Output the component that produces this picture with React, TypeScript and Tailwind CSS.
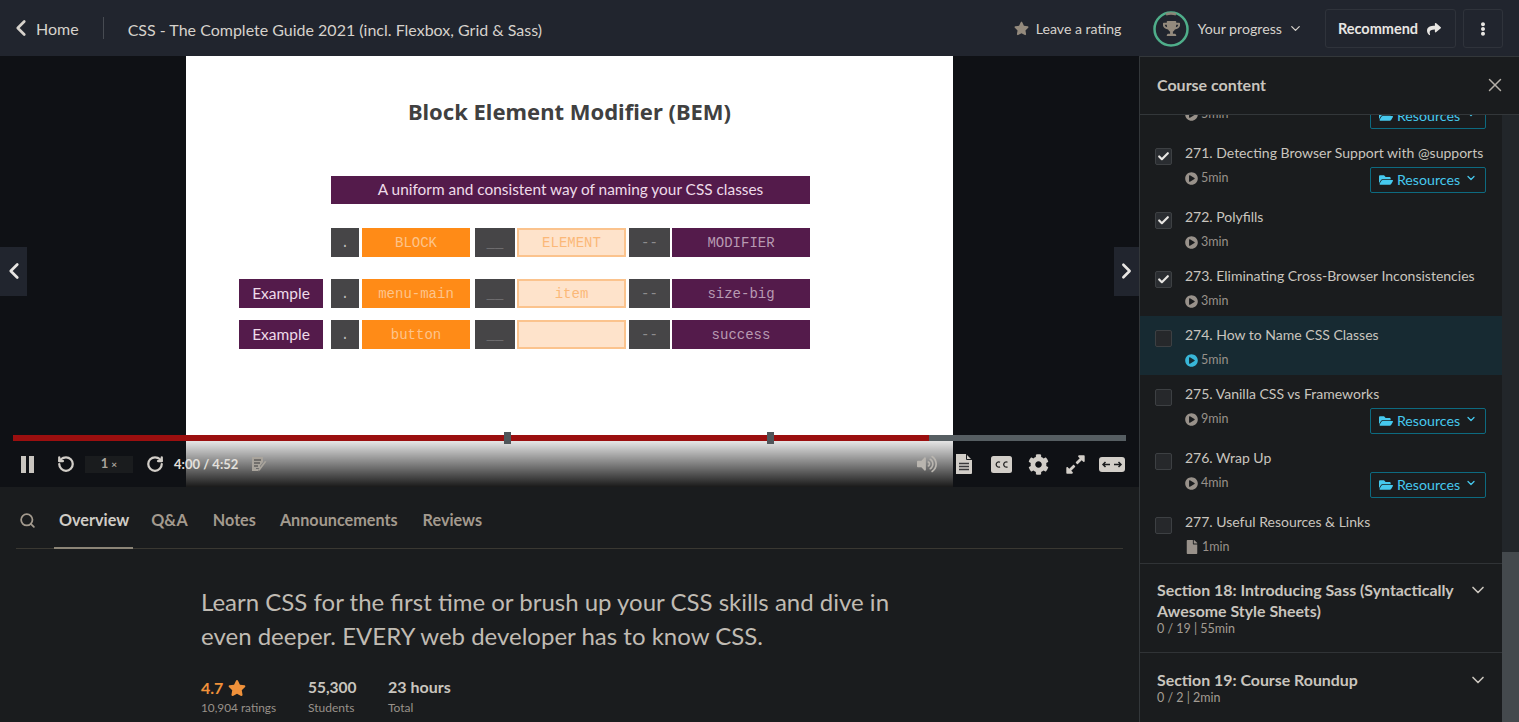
import { ChevronDown, ChevronLeft, ChevronRight, Search, X, RotateCcw, RotateCw, Check } from "lucide-react";
import { FaCog, FaFile, FaFolderOpen, FaPlayCircle, FaShare, FaStar, FaTrophy, FaVolumeUp, FaEllipsisV, FaExpandAlt } from "react-icons/fa";

const sans = "font-['Lato',sans-serif]";

interface Lecture {
  title: string;
  time: string;
  done?: boolean;
  current?: boolean;
  resources?: boolean;
  article?: boolean;
}

// first row is scrolled mostly out of view, only its bottom edge shows
const lectures: Lecture[] = [
  { title: "", time: "5min", done: true, resources: true },
  { title: "271. Detecting Browser Support with @supports", time: "5min", done: true, resources: true },
  { title: "272. Polyfills", time: "3min", done: true },
  { title: "273. Eliminating Cross-Browser Inconsistencies", time: "3min", done: true },
  { title: "274. How to Name CSS Classes", time: "5min", current: true },
  { title: "275. Vanilla CSS vs Frameworks", time: "9min", resources: true },
  { title: "276. Wrap Up", time: "4min", resources: true },
  { title: "277. Useful Resources & Links", time: "1min", article: true },
];

const Cell = ({ className, children }: { className: string; children?: React.ReactNode }) => (
  <div className={`flex h-[29px] items-center justify-center font-['Liberation_Mono',monospace] text-sm ${className}`}>{children}</div>
);

const SlideRow = ({ label, block, element, modifier }: { label?: string; block: string; element: string; modifier: string }) => (
  <div className="flex">
    {label ? (
      <div className="flex h-[29px] w-[84px] items-center justify-center bg-[#541b4b] font-['Lato',sans-serif] text-[15.500px] text-[#eedbe9]">{label}</div>
    ) : (
      <div className="w-[84px]" />
    )}
    <Cell className="ml-[8px] w-[28px] bg-[#464547] text-[#bdbcbd]">.</Cell>
    <Cell className="ml-[3px] w-[108px] bg-[#ff8b17] text-[#fdc48b]">{block}</Cell>
    <Cell className="ml-[5px] w-[40px] bg-[#464547] text-[#8d8c8e]">__</Cell>
    <Cell className="ml-[2px] w-[109px] border-2 border-[#fbc38d] bg-[#fee3cb] text-[#fbb878]">{element}</Cell>
    <Cell className="ml-[3px] w-[41px] bg-[#464547] text-[#8d8c8e]">--</Cell>
    <Cell className="ml-[2px] w-[138px] bg-[#541b4b] text-[#b89ab2]">{modifier}</Cell>
  </div>
);

const Slide = () => (
  <div className="flex h-full w-[767px] flex-col items-center bg-white pt-[40px]">
    <h1 className="font-['Noto_Sans',sans-serif] text-[22px] leading-[30px] font-bold text-[#404040]">Block Element Modifier (BEM)</h1>
    <div className="mt-[50px] flex w-full flex-col pl-[53px]">
      <div className="ml-[92px] flex h-[28px] w-[479px] items-center justify-center bg-[#541b4b] font-['Lato',sans-serif] text-[15.400px] text-[#eedbe9]">
        A uniform and consistent way of naming your CSS classes
      </div>
      <div className="mt-[24px]">
        <SlideRow block="BLOCK" element="ELEMENT" modifier="MODIFIER" />
      </div>
      <div className="mt-[22px]">
        <SlideRow label="Example" block="menu-main" element="item" modifier="size-big" />
      </div>
      <div className="mt-[12px]">
        <SlideRow label="Example" block="button" element="" modifier="success" />
      </div>
    </div>
  </div>
);

const Video = () => (
  <div className="relative flex h-[431px] justify-center bg-[#0f1115]">
    <Slide />
    <button className="absolute top-[191px] left-0 flex h-[49px] w-[27px] items-center justify-center bg-[#21252e] pb-[2px] text-[#e8e6e3]">
      <ChevronLeft size={26} strokeWidth={2.5} />
    </button>
    <button className="absolute top-[191px] right-0 flex h-[49px] w-[25px] items-center justify-center bg-[#21252e] pb-[2px] text-[#e8e6e3]">
      <ChevronRight size={26} strokeWidth={2.5} />
    </button>
    <div className="absolute bottom-0 left-[186px] h-[46px] w-[767px] bg-gradient-to-b from-black/10 to-black/90" />
    {/* progress */}
    <div className="absolute top-[379px] left-[13px] flex h-[6px] w-[1113px]">
      <div className="w-[916px] bg-[#9b0f0f]" />
      <div className="flex-1 bg-[#565e62]" />
      <span className="absolute top-[-3px] left-[491px] h-[12px] w-[7px] bg-[#50565a]" />
      <span className="absolute top-[-3px] left-[754px] h-[12px] w-[7px] bg-[#50565a]" />
    </div>
    {/* controls */}
    <div className={`absolute right-[14px] bottom-[5px] left-[21px] flex h-[36px] items-center justify-between text-[#d2cec8] ${sans}`}>
      <div className="flex items-center">
        <svg width="13" height="17" viewBox="0 0 13 17" fill="#c9c5bf"><rect width="5" height="17" /><rect x="8" width="5" height="17" /></svg>
        <RotateCcw size={18} strokeWidth={3} className="ml-[23px]" />
        <div className="ml-[10px] flex h-[17px] w-[48px] items-center justify-center bg-[#1a1c1e] text-[13px] font-bold text-[#a9a49c]">1<span className="ml-[3px] text-[10px]">×</span></div>
        <RotateCw size={18} strokeWidth={3} className="ml-[13px]" />
        <span className="ml-[10px] pt-[1px] text-[13px] font-bold text-[#e3e0dc]">4:00 / 4:52</span>
        <svg width="16" height="15" viewBox="0 0 16 15" className="ml-[13px]">
          <path d="M1 0h11v5l-3 4v2H5v1h3l-1 2H1z" fill="#a9a49c" />
          <path d="M3 3h7M3 6h6M3 9h4" stroke="#3a3a3c" strokeWidth="1" />
          <path d="M15.500 4.500l-6 8-2 2 .4-3 6-7.500z" fill="#a9a49c" />
        </svg>
      </div>
      <div className="flex items-center">
        <FaVolumeUp size={20} className="text-[#b9b5af]" />
        <svg width="18" height="20" viewBox="0 0 18 20" className="ml-[18px]">
          <path d="M1 0h10l6 6v13a1 1 0 0 1-1 1H1z" fill="#d2cec8" />
          <path d="M11.500 0v5.500H17" stroke="#1a1c1e" strokeWidth="1" fill="none" />
          <path d="M4 9.500h10M4 12.500h10M4 15.500h10" stroke="#3a3a3c" strokeWidth="1.300" />
        </svg>
        <svg width="21" height="17" viewBox="0 0 21 17" className="ml-[18px]">
          <rect width="21" height="17" rx="2.500" fill="#d2cec8" />
          <path d="M9 6.200A2.600 2.600 0 1 0 9 10.800M16.500 6.200A2.600 2.600 0 1 0 16.500 10.800" stroke="#222" strokeWidth="1.300" fill="none" />
        </svg>
        <FaCog size={21} className="ml-[16px]" />
        <FaExpandAlt size={21} className="ml-[16px]" />
        <svg width="26" height="15" viewBox="0 0 26 15" className="ml-[13px]">
          <rect width="26" height="15" rx="3" fill="#d2cec8" />
          <path d="M11 7.500H4m2.500-2.500L4 7.500 6.500 10M15 7.500h7m-2.500-2.500L22 7.500 19.500 10" stroke="#1a1c1e" strokeWidth="1.500" fill="none" />
        </svg>
      </div>
    </div>
  </div>
);

const Tabs = () => (
  <div className="mx-[16px] flex h-[62px] items-center border-b border-[#3a3832] pt-[5px] text-[16.200px] font-bold text-[#a39a8e]">
    <Search size={17} strokeWidth={2.5} className="ml-[3px]" />
    <div className="relative ml-[23px] flex h-full items-center text-[#d0ccc6]">
      Overview
      <span className="absolute right-[-4px] bottom-[-1px] left-[-5px] h-[2px] bg-[#8c8577]" />
    </div>
    <span className="ml-[22px]">Q&amp;A</span>
    <span className="ml-[25px]">Notes</span>
    <span className="ml-[24px]">Announcements</span>
    <span className="ml-[25px]">Reviews</span>
  </div>
);

const Overview = () => (
  <div className="pt-[36px] pl-[201px]">
    <p className="w-[720px] text-[24px] leading-[34px] text-[#c0bbb3]">
      Learn CSS for the first time or brush up your CSS skills and dive in even deeper. EVERY web developer has to know CSS.
    </p>
    <div className="mt-[24px] flex">
      <div className="w-[107px]">
        <div className="flex items-center pt-[1px] text-[16px] leading-[20px] font-bold text-[#f0913a]">
          4.7 <FaStar size={18} className="ml-[5px]" />
        </div>
        <div className="text-[11.800px] leading-[20px] text-[#98918a]">10,904 ratings</div>
      </div>
      <div className="w-[80px]">
        <div className="text-[15.500px] leading-[20px] font-bold text-[#c9c5be]">55,300</div>
        <div className="mt-[1px] text-[12px] leading-[20px] text-[#98918a]">Students</div>
      </div>
      <div>
        <div className="text-[16px] leading-[20px] font-bold text-[#c9c5be]">23 hours</div>
        <div className="mt-[1px] text-[12px] leading-[20px] text-[#98918a]">Total</div>
      </div>
    </div>
  </div>
);

const LectureRow = ({ item, first }: { item: Lecture; first: boolean }) => (
  <div className={`flex pt-[8px] pr-[16px] pb-[5px] pl-[15px] ${item.current ? "bg-[#172a32]" : ""} ${first ? "mt-[-45px]" : ""}`}>
    <div className={`mt-[6px] flex h-[17px] w-[17px] items-center justify-center rounded-[2px] border border-[#3d4043] ${item.done ? "bg-[#2a2d31] text-[#e8e6e3]" : "bg-[#26282b]"}`}>
      {item.done && <Check size={13} strokeWidth={4} />}
    </div>
    <div className="ml-[13px] min-w-0 flex-1">
      <div className="mb-[4px] min-h-[21px] text-[14px] leading-[21px] whitespace-nowrap text-[#c9c5be]">{item.title}</div>
      <div className="flex items-start justify-between">
        <div className="flex h-[21px] items-center pt-[1px] text-[12.500px] text-[#98918a]">
          {item.article ? (
            <FaFile size={14} className="mr-[3px]" />
          ) : (
            <FaPlayCircle size={13} className={`mr-[3px] ${item.current ? "text-[#38b6d8]" : ""}`} />
          )}
          {item.time}
        </div>
        {item.resources && (
          <div className="flex h-[26px] w-[116px] items-center justify-center rounded-[2px] border border-[#0d6a80] text-[14.200px] text-[#46c9ee]">
            <FaFolderOpen size={14} className="mr-[4px]" />
            Resources
            <ChevronDown size={12} strokeWidth={2.5} className="mb-[4px] ml-[5px]" />
          </div>
        )}
      </div>
    </div>
  </div>
);

const SectionRow = ({ title, meta, last }: { title: string; meta: string; last?: boolean }) => (
  <div className={`flex justify-between border-t border-[#303336] pr-[14px] pb-[16px] pl-[17px] ${last ? "pt-[16px]" : "pt-[15px]"}`}>
    <div className="w-[309px]">
      <div className="text-[15.900px] leading-[21px] font-bold text-[#c9c5be]">{title}</div>
      <div className="mt-[1px] text-[12.500px] leading-[14px] text-[#a39c93]">{meta}</div>
    </div>
    <ChevronDown size={20} strokeWidth={2} className="mt-[1px] text-[#c9c5be]" />
  </div>
);

const Sidebar = () => (
  <aside className="flex w-[380px] flex-col border-t border-l border-[#33373a] bg-[#1a1c1e]">
    <div className="flex h-[58px] shrink-0 items-center justify-between border-b border-[#33373a] pr-[13px] pb-[2px] pl-[17px] text-[16px] font-bold text-[#c9c5be]">
      Course content
      <X size={22} strokeWidth={1.6} className="text-[#b4afa7]" />
    </div>
    <div className="flex min-h-0 flex-1">
      <div className="min-w-0 flex-1 overflow-hidden">
        <div className="pb-[1px]">
          {lectures.map((item, i) => (
            <LectureRow key={i} item={item} first={i === 0} />
          ))}
        </div>
        <SectionRow title="Section 18: Introducing Sass (Syntactically Awesome Style Sheets)" meta="0 / 19 | 55min" />
        <SectionRow title="Section 19: Course Roundup" meta="0 / 2 | 2min" last />
      </div>
      <div className="flex w-[17px] flex-col justify-end bg-[#22262a]">
        <div className="h-[170px] bg-[#44494d]" />
      </div>
    </div>
  </aside>
);

const Header = () => (
  <header className="flex h-[56px] shrink-0 items-center bg-[#21252e] text-[#d6d2cc]">
    <ChevronLeft size={26} strokeWidth={2.5} className="ml-[8px]" />
    <span className="ml-[2px] pt-[1px] text-[16px]">Home</span>
    <span className="ml-[24px] h-[22px] w-px bg-[#474b52]" />
    <span className="ml-[24px] pt-[3px] text-[16px]">CSS - The Complete Guide 2021 (incl. Flexbox, Grid &amp; Sass)</span>
    <div className="ml-auto flex items-center pt-[1px] pr-[16px]">
      <FaStar size={15} className="text-[#948a7d]" />
      <span className="ml-[7px] text-[14.100px]">Leave a rating</span>
      <div className="relative ml-[32px] flex h-[36px] w-[36px] items-center justify-center">
        <svg width="36" height="36" viewBox="0 0 36 36" className="absolute inset-0">
          <circle cx="18" cy="18" r="16.500" fill="none" stroke="#4fae8a" strokeWidth="2.500" />
          <path d="M13 3.300A16 16 0 0 1 23 3.300" fill="none" stroke="#8c8577" strokeWidth="2.500" />
        </svg>
        <FaTrophy size={17} className="text-[#948a7d]" />
      </div>
      <span className="ml-[8px] text-[14.200px]">Your progress</span>
      <ChevronDown size={15} strokeWidth={2} className="ml-[6px]" />
      <button className="ml-[22px] flex h-[39px] w-[131px] items-center justify-center rounded-[3px] border border-[#2f333b] pr-[2px] text-[14.500px] font-bold text-[#e8e6e3]">
        Recommend
        <FaShare size={14} className="ml-[9px]" />
      </button>
      <button className="ml-[7px] flex h-[39px] w-[40px] items-center justify-center rounded-[3px] border border-[#2f333b] text-[#e8e6e3]">
        <FaEllipsisV size={14} />
      </button>
    </div>
  </header>
);

export default function App() {
  return (
    <div className={`flex h-[722px] w-full flex-col overflow-hidden bg-[#1a1c1e] ${sans}`}>
      <Header />
      <div className="flex min-h-0 flex-1">
        <main className="w-[1139px] shrink-0 overflow-hidden">
          <Video />
          <Tabs />
          <Overview />
        </main>
        <Sidebar />
      </div>
    </div>
  );
}
